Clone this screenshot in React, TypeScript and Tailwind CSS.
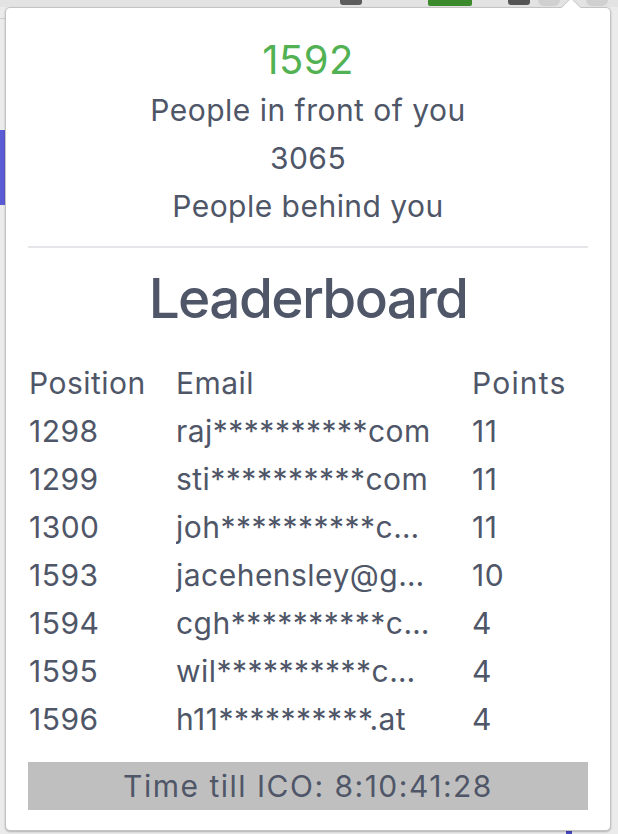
import React from "react";

const rows = [
  { pos: 1298, email: "raj**********com", points: 11 },
  { pos: 1299, email: "sti**********com", points: 11 },
  { pos: 1300, email: "joh**********com", points: 11 },
  { pos: 1593, email: "jacehensley@gmail.com", points: 10 },
  { pos: 1594, email: "cgh**********com", points: 4 },
  { pos: 1595, email: "wil**********com", points: 4 },
  { pos: 1596, email: "h11**********.at", points: 4 },
];

export default function App() {
  return (
    <div
      className="w-[618px] h-[834px] overflow-hidden bg-[#ebebeb] flex flex-col"
      style={{ fontFamily: "Inter, 'Liberation Sans', sans-serif" }}
    >
      {/* browser toolbar peeking out above the popup */}
      <div className="h-[7px] shrink-0 flex items-start bg-[#e3e3e3] overflow-hidden">
        <div className="ml-[340px] w-[22px] h-[5px] rounded-b-[3px] bg-[#5c5c5c]" />
        <div className="ml-[66px] w-[44px] h-[6px] rounded-b-[2px] bg-[#3b8a2c]" />
        <div className="ml-[36px] w-[22px] h-[5px] rounded-b-[3px] bg-[#555]" />
        <div className="ml-[8px] w-[22px] h-[6px] rounded-b-[6px] bg-[#d0d0d0]" />
        <div className="ml-[26px] w-[22px] h-[6px] rounded-b-[6px] bg-[#d0d0d0]" />
      </div>

      <div className="flex flex-1">
        <div className="w-[5px] shrink-0 flex flex-col">
          <div className="mt-[11px] h-px bg-[#cfcfcf]" />
          <div className="mt-[111px] h-[75px] bg-[#5b5bd5]" />
        </div>

        <div className="relative w-[606px] h-[824px] shrink-0 rounded-[5px] bg-white border border-[#c4c4c4] shadow-[0_1px_2px_rgba(0,0,0,0.25)] px-[22px] pt-[26px] text-[#4f5668] tracking-[0.03em]">
          {/* popup arrow */}
          <div className="absolute left-[558px] -top-[8px] w-[14px] h-[14px] rotate-45 bg-white border-l border-t border-[#c8c8c8]" />

          <div className="text-center text-[30px] leading-[48px]">
            <div className="text-[#52b152] text-[40px] leading-[52px] tracking-[0.01em]">1592</div>
            <div>People in front of you</div>
            <div>3065</div>
            <div>People behind you</div>
          </div>

          <div className="mt-[16px] h-[2px] bg-[#e6e6ea]" />

          <h1 className="mt-[20px] text-center text-[55px] leading-[60px] font-medium tracking-[-0.03em]">
            Leaderboard
          </h1>

          <table className="mt-[31px] w-full text-[30px] leading-[48px] text-left border-collapse">
            <thead>
              <tr>
                <th className="font-normal w-[148px] pl-[1px]">Position</th>
                <th className="font-normal w-[296px]">Email</th>
                <th className="font-normal tracking-[0.04em]">Points</th>
              </tr>
            </thead>
            <tbody>
              {rows.map((r) => (
                <tr key={r.pos}>
                  <td className="pl-[1px]">{r.pos}</td>
                  <td className="pr-[20px]">
                    <div className="max-w-[255px] overflow-hidden text-ellipsis whitespace-nowrap">
                      {r.email}
                    </div>
                  </td>
                  <td>{r.points}</td>
                </tr>
              ))}
            </tbody>
          </table>

          <div className="mt-[19px] h-[48px] bg-[#bfbfbf] flex items-center justify-center text-[30px] tracking-[0.05em]">
            Time till ICO: 8:10:41:28
          </div>
        </div>
      </div>

      <div className="h-[3px] shrink-0 flex">
        <div className="ml-[566px] w-[6px] bg-[#4848c0]" />
      </div>
    </div>
  );
}
